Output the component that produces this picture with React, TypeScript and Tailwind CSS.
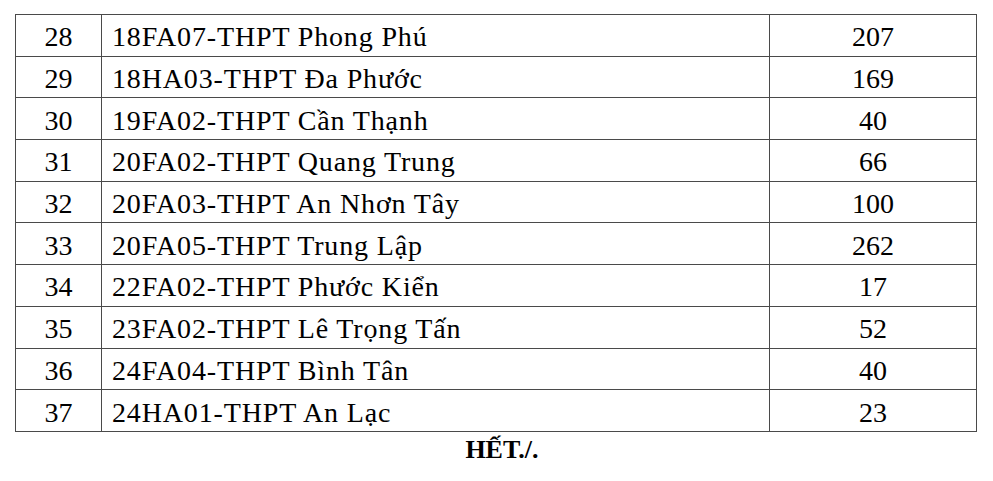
const rows: [number, string, number][] = [
  [28, '18FA07-THPT Phong Phú', 207],
  [29, '18HA03-THPT Đa Phước', 169],
  [30, '19FA02-THPT Cần Thạnh', 40],
  [31, '20FA02-THPT Quang Trung', 66],
  [32, '20FA03-THPT An Nhơn Tây', 100],
  [33, '20FA05-THPT Trung Lập', 262],
  [34, '22FA02-THPT Phước Kiển', 17],
  [35, '23FA02-THPT Lê Trọng Tấn', 52],
  [36, '24FA04-THPT Bình Tân', 40],
  [37, '24HA01-THPT An Lạc', 23],
];

export default function App() {
  return (
    <div className="h-[481px] w-[993px] bg-white pl-[15px] pt-[14px] text-black font-['Liberation_Serif','Times_New_Roman',serif]">
      <div className="flex w-[962px] flex-col border-l border-t border-[#4a4a4a] text-[28px] leading-none">
        {rows.map(([n, name, count]) => (
          <div key={n} className="flex h-[41.7px] border-b border-[#4a4a4a]">
            <div className="flex w-[86px] items-center justify-center border-r border-[#4a4a4a] pt-[4px]">
              {n}
            </div>
            <div className="flex w-[668px] items-center border-r border-[#4a4a4a] pl-[10px] pt-[4px] tracking-[0.85px]">
              {name}
            </div>
            <div className="flex w-[207px] items-center justify-center border-r border-[#4a4a4a] pt-[4px]">
              {count}
            </div>
          </div>
        ))}
      </div>
      <p className="w-[962px] pl-[12px] pt-[5px] text-center text-[26px] font-bold leading-none">HẾT./.</p>
    </div>
  );
}
